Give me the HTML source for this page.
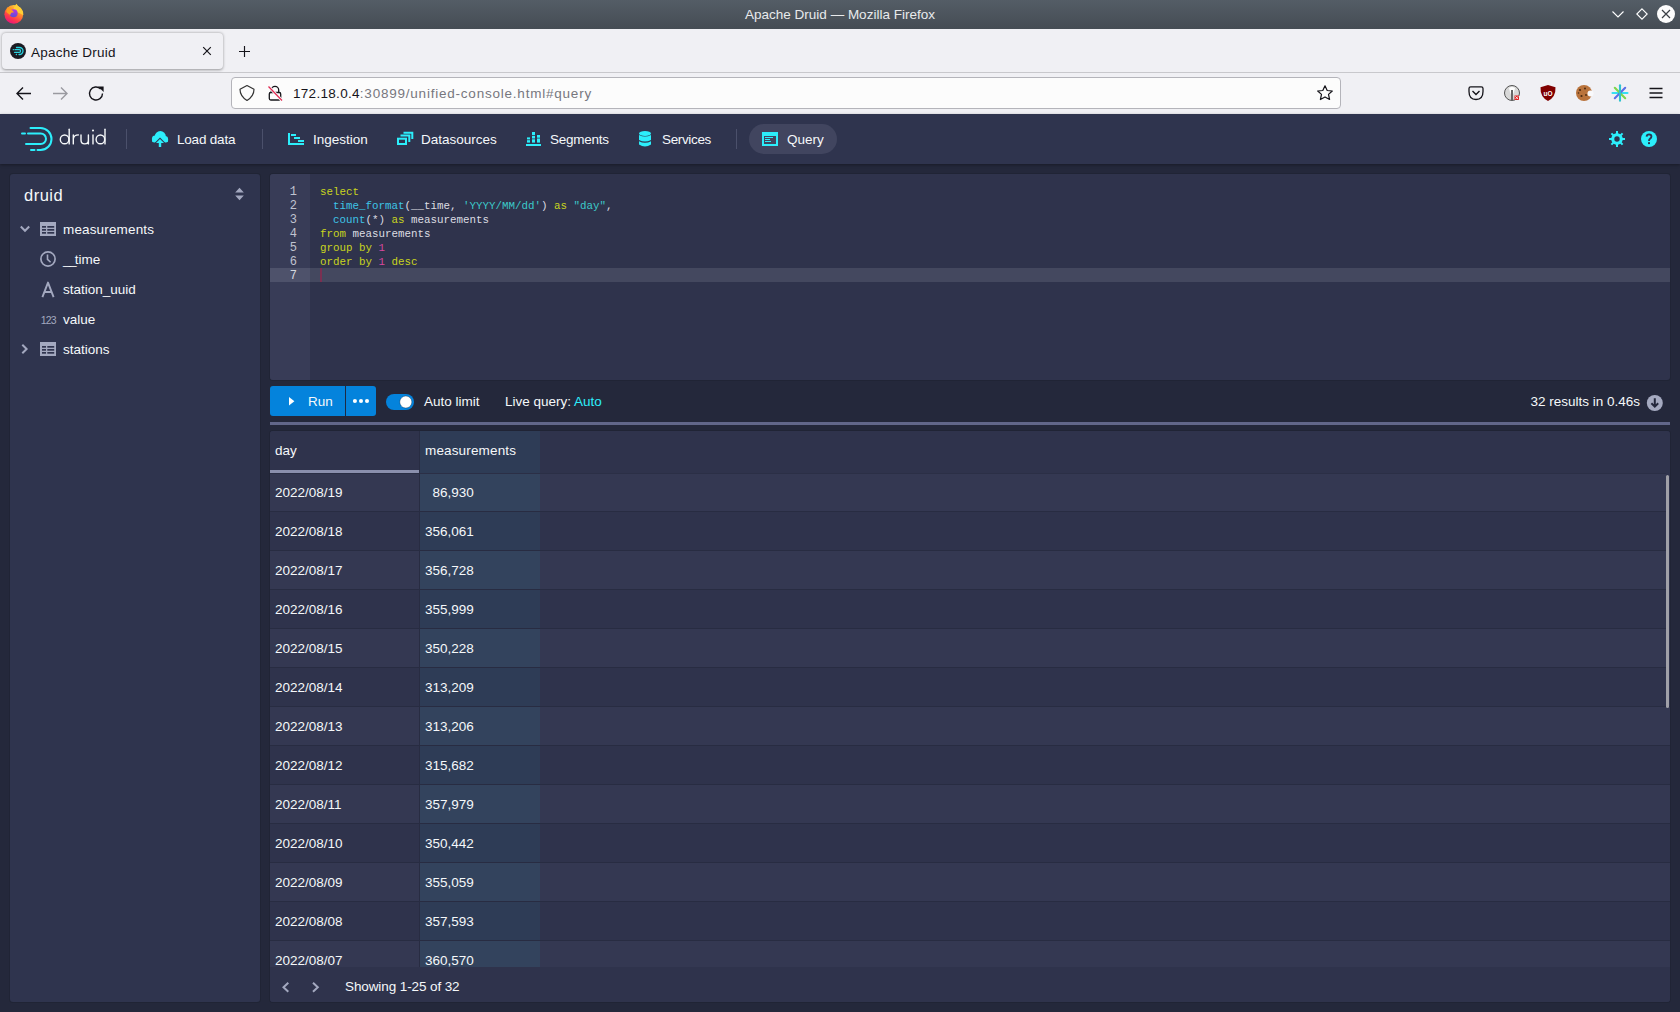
<!DOCTYPE html>
<html><head><meta charset="utf-8">
<style>
*{box-sizing:border-box;margin:0;padding:0}
html,body{width:1680px;height:1012px;overflow:hidden;background:#24283b;font-family:"Liberation Sans",sans-serif;}
.abs{position:absolute}
#titlebar{position:absolute;left:0;top:0;width:1680px;height:29px;background:linear-gradient(#545d66,#454c54);color:#e8eaec;font-size:13.5px;text-align:center;line-height:30px}
#tabbar{position:absolute;left:0;top:29px;width:1680px;height:44px;background:#f0f0f4;border-bottom:1px solid #c8c8cc}
#tab{position:absolute;left:2px;top:4px;width:221px;height:36px;background:#f0f0f4;border-radius:4px;box-shadow:0 0.5px 3px rgba(0,0,0,.38)}
#navbar{position:absolute;left:0;top:73px;width:1680px;height:41px;background:#f0f0f4}
#url{position:absolute;left:231px;top:4px;width:1110px;height:32px;background:#fcfcfc;border:1px solid #b4b4ba;border-radius:4px}
#header{position:absolute;left:0;top:114px;width:1680px;height:50px;background:#2f344e;box-shadow:0 1px 3px rgba(0,0,0,.35)}
.nav{position:absolute;top:114.7px;height:50px;line-height:50px;color:#f5f8fa;font-size:13.5px}
#left{position:absolute;left:10px;top:174px;width:250px;height:828px;background:#2f344e;border-radius:3px}
#editor{position:absolute;left:270px;top:174px;width:1400px;height:206px;background:#2f344e;border-radius:3px;overflow:hidden}
#gutter{position:absolute;left:0;top:0;width:40px;height:206px;background:#383c56}
#table{position:absolute;left:270px;top:431px;width:1400px;height:571px;background:#2f344e;border-radius:3px;overflow:hidden}
.t{position:absolute;line-height:20px;white-space:nowrap}
</style></head><body>
<div id="titlebar">Apache Druid — Mozilla Firefox</div>
<div id="tabbar"><div id="tab"></div></div>
<div id="navbar"><div id="url"></div></div>
<div class="abs" style="left:31px;top:29.5px;height:45px;line-height:45px;font-size:13.5px;letter-spacing:0.25px;color:#15141a">Apache Druid</div>
<div class="abs" style="left:293px;top:78px;height:31px;line-height:31px;font-size:13.5px;letter-spacing:0.3px;color:#15141a">172.18.0.4<span style="color:#77777e;letter-spacing:0.78px">:30899/unified-console.html#query</span></div>
<svg class="abs" style="left:0;top:0" width="1680" height="114" viewBox="0 0 1680 114">

<!-- firefox logo -->
<defs>
<linearGradient id="ffring" x1="0.8" y1="0.1" x2="0.3" y2="1"><stop offset="0" stop-color="#ffd43b"/><stop offset="0.35" stop-color="#ff8a2a"/><stop offset="0.7" stop-color="#ff3a4c"/><stop offset="1" stop-color="#e8137e"/></linearGradient>
<linearGradient id="ffglobe" x1="0.5" y1="0" x2="0.4" y2="1"><stop offset="0" stop-color="#b734e0"/><stop offset="1" stop-color="#5a4fd6"/></linearGradient>
</defs>
<circle cx="13.8" cy="14.3" r="9.4" fill="url(#ffring)"/>
<path d="M13.2,9.5 Q14.2,6 16.4,3.7 Q18,6.5 21,8.3 Q23.6,11.5 23.2,15 L17,12 Z" fill="#ffcf36"/>
<circle cx="13.6" cy="13.3" r="4" fill="url(#ffglobe)"/>
<path d="M6.3,12 Q6.6,8.8 7.4,7.2 L8.4,8.4 Q9.6,7.6 10.6,7.6 L11.4,9.4 Q12.8,10.6 14,12.2 L11.3,12.8 Q10.5,14 10.2,15 Q8,13.5 6.3,12 Z" fill="#ff9d1e"/>
<!-- window controls -->
<path d="M1612.5,11.5 L1618,17 L1623.5,11.5" fill="none" stroke="#fff" stroke-width="1.1"/>
<path d="M1642,8.8 L1647.2,14 L1642,19.2 L1636.8,14 Z" fill="none" stroke="#fff" stroke-width="1.1"/>
<circle cx="1666" cy="14" r="9" fill="#fcfcfc"/>
<path d="M1662,10 L1670,18 M1670,10 L1662,18" stroke="#3a3f45" stroke-width="1.2"/>
<!-- favicon -->
<circle cx="18" cy="51" r="8" fill="#1c1b22"/>
<g fill="none" stroke="#2bd3e0" stroke-width="1.3" stroke-linecap="round">
<path d="M16.5,47.5 H19.5 A3.5,3.5 0 0 1 19.5,54.5 H19"/>
<path d="M15,49.7 H19.3 A1.3,1.3 0 0 1 19.3,52.3 H14.5"/>
<path d="M13.3,49.7 H13.4 M16.3,54.5 H16.5"/>
</g>
<!-- tab close and plus -->
<path d="M203.2,47.2 L210.8,54.8 M210.8,47.2 L203.2,54.8" stroke="#15141a" stroke-width="1.2"/>
<path d="M239,51.5 H250 M244.5,46 V57" stroke="#15141a" stroke-width="1.15"/>
<!-- back / forward / reload -->
<path d="M17,93.5 H31 M23,87.5 L17,93.5 L23,99.5" fill="none" stroke="#15141a" stroke-width="1.4"/>
<path d="M53,93.5 H67 M61,87.5 L67,93.5 L61,99.5" fill="none" stroke="#9a9aa0" stroke-width="1.4"/>
<path d="M102.5,93.5 A6.5,6.5 0 1 1 100.7,89" fill="none" stroke="#15141a" stroke-width="1.4"/>
<path d="M98.2,86.6 L103.6,86.6 L103.6,92 Z" fill="#15141a"/>
<!-- shield -->
<path d="M247,85.5 L254,89.2 Q254,96 247,100.5 Q240,96 240,89.2 Z" fill="none" stroke="#333" stroke-width="1.2" stroke-linejoin="round"/>
<!-- lock slash -->
<path d="M271.3,92.5 V90 A3.7,3.7 0 0 1 278.7,90 V92.5" fill="none" stroke="#15141a" stroke-width="1.3"/>
<rect x="269.3" y="92.5" width="11.4" height="7.5" rx="1.5" fill="none" stroke="#15141a" stroke-width="1.3"/>
<path d="M268.5,86.5 L282,100.5" stroke="#f9f9fb" stroke-width="3"/>
<path d="M268.5,86.5 L282,100.5" stroke="#e22850" stroke-width="1.2"/>
<!-- star -->
<path d="M1325,85.8 L1327.2,90.5 L1332.3,91 L1328.5,94.4 L1329.6,99.5 L1325,96.9 L1320.4,99.5 L1321.5,94.4 L1317.7,91 L1322.8,90.5 Z" fill="none" stroke="#15141a" stroke-width="1.2" stroke-linejoin="round"/>
<!-- pocket -->
<path d="M1469,88.5 Q1469,86.8 1470.7,86.8 H1481.3 Q1483,86.8 1483,88.5 V91.5 Q1483,99.5 1476,99.5 Q1469,99.5 1469,91.5 Z" fill="none" stroke="#15141a" stroke-width="1.3"/>
<path d="M1472.5,91 L1476,94.5 L1479.5,91" fill="none" stroke="#15141a" stroke-width="1.4"/>
<!-- privacy badger-like -->
<circle cx="1512" cy="93" r="7.5" fill="#d8d8d8" stroke="#555" stroke-width="1"/>
<path d="M1509,88 Q1512,86 1515,88 L1514,92 Q1512,99 1510,92 Z" fill="#fff"/>
<path d="M1511,90 H1513 V100 H1511 Z" fill="#666"/>
<rect x="1514.5" y="95.5" width="4.5" height="4.5" fill="#e02020"/>
<path d="M1515.3,96.3 L1518.2,99.2 M1518.2,96.3 L1515.3,99.2" stroke="#fff" stroke-width="0.8"/>
<!-- ublock -->
<path d="M1548,85 L1555.5,87.3 Q1556,97 1548,101 Q1540,97 1540.5,87.3 Z" fill="#800000"/>
<text x="1548" y="96" font-family="Liberation Sans" font-size="6.5" font-weight="bold" fill="#fff" text-anchor="middle">uO</text>
<!-- cookie -->
<circle cx="1584" cy="93" r="8" fill="#b9733c"/>
<circle cx="1590.5" cy="93.5" r="3" fill="#f9f9fb"/>
<g fill="#4a2a12"><circle cx="1580" cy="90" r="1.1"/><circle cx="1585" cy="88.5" r="1"/><circle cx="1581.5" cy="96" r="1.1"/><circle cx="1586" cy="95" r="0.9"/><circle cx="1578.5" cy="93" r="0.8"/></g>
<!-- asterisk -->
<g stroke-width="2.1" stroke-linecap="round">
<path d="M1612.5,93 H1627.5" stroke="#36def2"/>
<path d="M1614.8,87.8 L1625.2,98.2" stroke="#7ed64c"/>
<path d="M1625.2,87.8 L1614.8,98.2" stroke="#5b6fe6"/>
<path d="M1620,85.2 V100.8" stroke="#2fc4cf"/>
</g>
<!-- hamburger -->
<path d="M1649.5,88.5 H1662.5 M1649.5,93 H1662.5 M1649.5,97.5 H1662.5" stroke="#15141a" stroke-width="1.3"/>
</svg>
<div id="header"></div>
<svg class="abs" style="left:0;top:114px" width="1680" height="50" viewBox="0 114 1680 50">
<g fill="none" stroke="#2ceefb" stroke-width="2" stroke-linecap="round">
<path d="M30.5,128 H40.5 A11,11 0 0 1 40.5,150 H37.5"/>
<path d="M31,150 H34.5"/>
<path d="M28,133.5 H40.75 A5.25,5.25 0 0 1 40.75,144 H26"/>
<path d="M22,133.5 H25"/>
</g>
<g fill="none" stroke="#f5f8fa" stroke-width="1.4" stroke-linecap="round">
<ellipse cx="64.6" cy="139.4" rx="4.3" ry="4.4"/><path d="M69.2,129.3 V143.9"/>
<path d="M73.3,135 V143.9 M73.3,139 Q73.8,134.9 78.4,134.9"/>
<path d="M81,135 V140 Q81,143.9 84.7,143.9 Q88.4,143.9 88.4,140 M88.4,135 V143.9"/>
<path d="M93,135 V143.9"/>
<ellipse cx="100.4" cy="139.4" rx="4.3" ry="4.4"/><path d="M105,129.3 V143.9"/>
</g>
<circle cx="93" cy="130.5" r="1.05" fill="#f5f8fa"/>
<rect x="126" y="129" width="1" height="20" fill="#4b506b"/>
<rect x="262" y="129" width="1" height="20" fill="#4b506b"/>
<rect x="736" y="129" width="1" height="20" fill="#4b506b"/>
<rect x="749" y="124" width="88" height="30" rx="15" fill="#41455f"/>
<!-- cloud upload -->
<g fill="#2ceefb">
<circle cx="160.3" cy="136.6" r="5.6"/><circle cx="155.3" cy="139" r="3.4"/><circle cx="164.9" cy="139.2" r="3.2"/>
<rect x="152" y="139" width="16.1" height="3.2" rx="1.5"/>
</g>
<path d="M160,138.6 L164.6,143.2 H161.4 V147.2 H158.6 V143.2 H155.4 Z" fill="#2ceefb" stroke="#2f344e" stroke-width="1.5" stroke-linejoin="miter"/>
<path d="M160,139 L164,143 H161.2 V147 H158.8 V143 H156 Z" fill="#2ceefb"/>
<!-- gantt -->
<g fill="#2ceefb">
<rect x="288" y="133" width="2" height="12"/><rect x="288" y="143" width="16" height="2"/>
<rect x="291" y="134" width="5" height="2"/><rect x="294" y="137" width="6" height="2"/><rect x="298" y="140" width="6" height="2"/>
</g>
<!-- multi-select -->
<g fill="none" stroke="#2ceefb" stroke-width="2">
<rect x="398" y="138.7" width="8" height="5.3"/>
<path d="M400.5,135.5 H409.3 V142"/>
<path d="M403.5,132.7 H412.3 V139"/>
</g>
<!-- stacked chart -->
<g fill="#2ceefb">
<rect x="526" y="144" width="15" height="2"/>
<rect x="527" y="137.4" width="3" height="2"/><rect x="527" y="140.2" width="3" height="2.4"/>
<rect x="532" y="132" width="3" height="3.2"/><rect x="532" y="136" width="3" height="2.5"/><rect x="532" y="139.3" width="3" height="3.3"/>
<rect x="537" y="135" width="3" height="2.7"/><rect x="537" y="138.5" width="3" height="4.1"/>
</g>
<!-- database -->
<g fill="#2ceefb">
<ellipse cx="645" cy="133.5" rx="6" ry="2.5"/>
<path d="M639,135 V140 Q645,143 651,140 V135 Q645,138 639,135 Z"/>
<path d="M639,141.2 V144.5 Q645,148.5 651,144.5 V141.2 Q645,144.2 639,141.2 Z"/>
</g>
<!-- application -->
<rect x="762" y="132" width="16" height="14" fill="#2ceefb"/>
<rect x="764" y="136" width="12" height="8" fill="#41455f"/>
<g fill="#2ceefb"><rect x="765" y="137" width="8" height="1"/><rect x="765" y="139" width="5" height="1"/><rect x="765" y="141" width="6" height="1"/></g>
<!-- cog -->
<g transform="translate(1609,131)">
<path fill="#2ceefb" fill-rule="evenodd" d="M7,0 H9 V2.3 Q10.3,2.6 11.3,3.3 L12.9,1.7 L14.3,3.1 L12.7,4.7 Q13.4,5.7 13.7,7 H16 V9 H13.7 Q13.4,10.3 12.7,11.3 L14.3,12.9 L12.9,14.3 L11.3,12.7 Q10.3,13.4 9,13.7 V16 H7 V13.7 Q5.7,13.4 4.7,12.7 L3.1,14.3 L1.7,12.9 L3.3,11.3 Q2.6,10.3 2.3,9 H0 V7 H2.3 Q2.6,5.7 3.3,4.7 L1.7,3.1 L3.1,1.7 L4.7,3.3 Q5.7,2.6 7,2.3 Z M8,5.3 A2.7,2.7 0 1 0 8,10.7 A2.7,2.7 0 1 0 8,5.3 Z"/>
</g>
<!-- help -->
<g transform="translate(1641,131)">
<circle cx="8" cy="8" r="8" fill="#2ceefb"/>
<path d="M5.6,5.6 Q5.8,3.4 8.1,3.4 Q10.5,3.5 10.4,5.7 Q10.3,6.8 9,7.8 Q8,8.6 8,10" fill="none" stroke="#2f344e" stroke-width="1.9"/>
<rect x="7" y="11.2" width="2" height="1.9" fill="#2f344e"/>
</g>
</svg>
<div class="nav" style="left:177px;letter-spacing:-0.2px">Load data</div>
<div class="nav" style="left:313px">Ingestion</div>
<div class="nav" style="left:421px">Datasources</div>
<div class="nav" style="left:550px;letter-spacing:-0.25px">Segments</div>
<div class="nav" style="left:662px;letter-spacing:-0.35px">Services</div>
<div class="nav" style="left:787px">Query</div>
<div class="abs" style="left:10px;top:174px;width:250px;height:828px;background:#2f344e;border-radius:3px;box-shadow:0 0 0 1px rgba(16,22,26,.18)"></div>
<div class="t" style="left:24px;top:185.28px;font-size:16.5px;color:#f5f8fa;letter-spacing:0.5px;">druid</div>
<svg class="abs" style="left:0;top:0" width="270" height="400" viewBox="0 0 270 400"><path d="M239.5,187.8 L243.8,192.6 H235.2 Z M235.2,195.4 H243.8 L239.5,200.2 Z" fill="#a3a8bf"/><path d="M20.8,226.5 L25,230.8 L29.2,226.5" fill="none" stroke="#a3a8bf" stroke-width="2"/><path d="M22.3,344.8 L26.6,349 L22.3,353.2" fill="none" stroke="#a3a8bf" stroke-width="2"/><rect x="40" y="222" width="16" height="14" fill="#a3a8bf"/><rect x="42" y="226" width="4" height="1.7" fill="#2f344e"/><rect x="47.3" y="226" width="6.9" height="1.7" fill="#2f344e"/><rect x="42" y="229" width="4" height="1.7" fill="#2f344e"/><rect x="47.3" y="229" width="6.9" height="1.7" fill="#2f344e"/><rect x="42" y="232" width="4" height="1.7" fill="#2f344e"/><rect x="47.3" y="232" width="6.9" height="1.7" fill="#2f344e"/><rect x="40" y="342" width="16" height="14" fill="#a3a8bf"/><rect x="42" y="346" width="4" height="1.7" fill="#2f344e"/><rect x="47.3" y="346" width="6.9" height="1.7" fill="#2f344e"/><rect x="42" y="349" width="4" height="1.7" fill="#2f344e"/><rect x="47.3" y="349" width="6.9" height="1.7" fill="#2f344e"/><rect x="42" y="352" width="4" height="1.7" fill="#2f344e"/><rect x="47.3" y="352" width="6.9" height="1.7" fill="#2f344e"/><circle cx="48" cy="259" r="7.1" fill="none" stroke="#a3a8bf" stroke-width="1.7"/><path d="M47.5,254.5 V259.3 L50.6,262.3" fill="none" stroke="#a3a8bf" stroke-width="1.6"/><path d="M42.4,297.2 L48,282.6 L53.6,297.2 M44.6,292 H51.4" fill="none" stroke="#a3a8bf" stroke-width="1.9" stroke-linejoin="round"/></svg>
<div class="t" style="left:40.8px;top:309.66px;font-size:10.5px;color:#a3a8bf;letter-spacing:-0.9px;">123</div>
<div class="t" style="left:63px;top:220.02px;font-size:13.5px;color:#f5f8fa;letter-spacing:0.15px;">measurements</div>
<div class="t" style="left:63px;top:250.02px;font-size:13.5px;color:#f5f8fa;letter-spacing:0px;"><span style="letter-spacing:-1.6px">__</span>time</div>
<div class="t" style="left:63px;top:280.02px;font-size:13.5px;color:#f5f8fa;letter-spacing:0px;">station_uuid</div>
<div class="t" style="left:63px;top:310.02px;font-size:13.5px;color:#f5f8fa;letter-spacing:0px;">value</div>
<div class="t" style="left:63px;top:340.02px;font-size:13.5px;color:#f5f8fa;letter-spacing:0px;">stations</div>
<div class="abs" style="left:270px;top:174px;width:1400px;height:206px;background:#2f334c;border-radius:3px;overflow:hidden;box-shadow:0 0 0 1px rgba(16,22,26,.18)"><div class="abs" style="left:0;top:0;width:40px;height:206px;background:#383c57"></div><div class="abs" style="left:0;top:94px;width:1400px;height:14px;background:#44485f"></div><div class="abs" style="left:0;top:94px;width:40px;height:14px;background:#4e526b"></div></div>
<div class="abs" style="left:320px;top:268px;width:2px;height:14px;background:#7a3052"></div>
<div class="t" style="left:320px;top:182.11px;font-size:10.83px;color:#f5f8fa;letter-spacing:0px;font-family:'Liberation Mono',monospace;white-space:pre;"><span style="color:#c8d41e">select</span></div>
<div class="t" style="left:320px;top:196.11px;font-size:10.83px;color:#f5f8fa;letter-spacing:0px;font-family:'Liberation Mono',monospace;white-space:pre;">  <span style="color:#3ec3e6">time_format</span><span style="color:#dcdde2">(__time, </span><span style="color:#3cc9c9">'YYYY/MM/dd'</span><span style="color:#dcdde2">) </span><span style="color:#c8d41e">as</span> <span style="color:#3cc9c9">"day"</span><span style="color:#dcdde2">,</span></div>
<div class="t" style="left:320px;top:210.11px;font-size:10.83px;color:#f5f8fa;letter-spacing:0px;font-family:'Liberation Mono',monospace;white-space:pre;">  <span style="color:#3ec3e6">count</span><span style="color:#dcdde2">(*) </span><span style="color:#c8d41e">as</span> <span style="color:#dcdde2">measurements</span></div>
<div class="t" style="left:320px;top:224.11px;font-size:10.83px;color:#f5f8fa;letter-spacing:0px;font-family:'Liberation Mono',monospace;white-space:pre;"><span style="color:#c8d41e">from</span> <span style="color:#dcdde2">measurements</span></div>
<div class="t" style="left:320px;top:238.11px;font-size:10.83px;color:#f5f8fa;letter-spacing:0px;font-family:'Liberation Mono',monospace;white-space:pre;"><span style="color:#c8d41e">group by</span> <span style="color:#d8489e">1</span></div>
<div class="t" style="left:320px;top:252.11px;font-size:10.83px;color:#f5f8fa;letter-spacing:0px;font-family:'Liberation Mono',monospace;white-space:pre;"><span style="color:#c8d41e">order by</span> <span style="color:#d8489e">1</span> <span style="color:#c8d41e">desc</span></div>
<div class="t" style="right:1383px;top:181.80px;font-size:12px;color:#c0c3d0;letter-spacing:0px;font-family:'Liberation Mono',monospace;">1</div>
<div class="t" style="right:1383px;top:195.80px;font-size:12px;color:#c0c3d0;letter-spacing:0px;font-family:'Liberation Mono',monospace;">2</div>
<div class="t" style="right:1383px;top:209.80px;font-size:12px;color:#c0c3d0;letter-spacing:0px;font-family:'Liberation Mono',monospace;">3</div>
<div class="t" style="right:1383px;top:223.80px;font-size:12px;color:#c0c3d0;letter-spacing:0px;font-family:'Liberation Mono',monospace;">4</div>
<div class="t" style="right:1383px;top:237.80px;font-size:12px;color:#c0c3d0;letter-spacing:0px;font-family:'Liberation Mono',monospace;">5</div>
<div class="t" style="right:1383px;top:251.80px;font-size:12px;color:#c0c3d0;letter-spacing:0px;font-family:'Liberation Mono',monospace;">6</div>
<div class="t" style="right:1383px;top:265.80px;font-size:12px;color:#d5d7df;letter-spacing:0px;font-family:'Liberation Mono',monospace;">7</div>
<div class="abs" style="left:270px;top:386px;width:106px;height:30px;background:#0483dc;border-radius:3px"></div>
<div class="abs" style="left:345px;top:386px;width:1px;height:30px;background:#1d2a44"></div>
<svg class="abs" style="left:0;top:380px" width="700" height="50" viewBox="0 380 700 50"><path d="M289,397 L294.4,401.2 L289,405.4 Z" fill="#fff"/><circle cx="354.9" cy="401" r="2.05" fill="#fff"/><circle cx="361" cy="401" r="2.05" fill="#fff"/><circle cx="367" cy="401" r="2.05" fill="#fff"/><rect x="386" y="394" width="28" height="16" rx="8" fill="#0483dc"/><circle cx="405.8" cy="402" r="6" fill="#fff" stroke="rgba(16,22,40,.45)" stroke-width="0.7"/></svg>
<div class="t" style="left:308px;top:391.62px;font-size:13.5px;color:#f5f8fa;letter-spacing:0px;">Run</div>
<div class="t" style="left:424px;top:391.62px;font-size:13.5px;color:#f5f8fa;letter-spacing:0px;">Auto limit</div>
<div class="t" style="left:505px;top:391.62px;font-size:13.5px;color:#f5f8fa;letter-spacing:0px;">Live query: <span style="color:#2ceefb">Auto</span></div>
<div class="t" style="right:40px;top:391.62px;font-size:13.5px;color:#f5f8fa;letter-spacing:0px;">32 results in 0.46s</div>
<svg class="abs" style="left:1645px;top:393px" width="18" height="18" viewBox="0 0 18 18"><circle cx="9.8" cy="10" r="8" fill="#a5aac0"/><path d="M9.8,5.3 V13.6 M6.4,10.3 L9.8,13.7 L13.2,10.3" fill="none" stroke="#24283b" stroke-width="2"/></svg>
<div class="abs" style="left:270px;top:422px;width:1400px;height:3px;background:#62678a"></div>
<div class="abs" style="left:270px;top:431px;width:1400px;height:571px;background:#2f334c;border-radius:3px;overflow:hidden;box-shadow:0 0 0 1px rgba(16,22,26,.18)">
<div class="abs" style="left:0;top:0;width:1400px;height:42px;background:#2f334c"></div>
<div class="abs" style="left:150px;top:0;width:120px;height:536px;background:#2e3c56"></div>
<div class="abs" style="left:0;top:42px;width:1396px;height:38px;background:#343852;border-top:1px solid #2b2f46"></div>
<div class="abs" style="left:150px;top:42px;width:120px;height:38px;background:#33435d;border-top:1px solid #2b2f46"></div>
<div class="abs" style="left:0;top:80px;width:1396px;height:39px;background:#2f334c;border-top:1px solid #282c42"></div>
<div class="abs" style="left:150px;top:80px;width:120px;height:39px;background:#2e3c56;border-top:1px solid #282c42"></div>
<div class="abs" style="left:0;top:119px;width:1396px;height:39px;background:#343852;border-top:1px solid #282c42"></div>
<div class="abs" style="left:150px;top:119px;width:120px;height:39px;background:#33435d;border-top:1px solid #282c42"></div>
<div class="abs" style="left:0;top:158px;width:1396px;height:39px;background:#2f334c;border-top:1px solid #282c42"></div>
<div class="abs" style="left:150px;top:158px;width:120px;height:39px;background:#2e3c56;border-top:1px solid #282c42"></div>
<div class="abs" style="left:0;top:197px;width:1396px;height:39px;background:#343852;border-top:1px solid #282c42"></div>
<div class="abs" style="left:150px;top:197px;width:120px;height:39px;background:#33435d;border-top:1px solid #282c42"></div>
<div class="abs" style="left:0;top:236px;width:1396px;height:39px;background:#2f334c;border-top:1px solid #282c42"></div>
<div class="abs" style="left:150px;top:236px;width:120px;height:39px;background:#2e3c56;border-top:1px solid #282c42"></div>
<div class="abs" style="left:0;top:275px;width:1400px;height:39px;background:#343852;border-top:1px solid #282c42"></div>
<div class="abs" style="left:150px;top:275px;width:120px;height:39px;background:#33435d;border-top:1px solid #282c42"></div>
<div class="abs" style="left:0;top:314px;width:1400px;height:39px;background:#2f334c;border-top:1px solid #282c42"></div>
<div class="abs" style="left:150px;top:314px;width:120px;height:39px;background:#2e3c56;border-top:1px solid #282c42"></div>
<div class="abs" style="left:0;top:353px;width:1400px;height:39px;background:#343852;border-top:1px solid #282c42"></div>
<div class="abs" style="left:150px;top:353px;width:120px;height:39px;background:#33435d;border-top:1px solid #282c42"></div>
<div class="abs" style="left:0;top:392px;width:1400px;height:39px;background:#2f334c;border-top:1px solid #282c42"></div>
<div class="abs" style="left:150px;top:392px;width:120px;height:39px;background:#2e3c56;border-top:1px solid #282c42"></div>
<div class="abs" style="left:0;top:431px;width:1400px;height:39px;background:#343852;border-top:1px solid #282c42"></div>
<div class="abs" style="left:150px;top:431px;width:120px;height:39px;background:#33435d;border-top:1px solid #282c42"></div>
<div class="abs" style="left:0;top:470px;width:1400px;height:39px;background:#2f334c;border-top:1px solid #282c42"></div>
<div class="abs" style="left:150px;top:470px;width:120px;height:39px;background:#2e3c56;border-top:1px solid #282c42"></div>
<div class="abs" style="left:0;top:509px;width:1400px;height:39px;background:#343852;border-top:1px solid #282c42"></div>
<div class="abs" style="left:150px;top:509px;width:120px;height:39px;background:#33435d;border-top:1px solid #282c42"></div>
<div class="abs" style="left:149px;top:0;width:1px;height:536px;background:#282c42"></div>
<div class="abs" style="left:0;top:39px;width:149px;height:3px;background:#8a8fad"></div>
<div class="abs" style="left:1396px;top:44px;width:3px;height:233px;background:#a0a0a8;border-radius:2px"></div>
<div class="abs" style="left:0;top:536px;width:1400px;height:35px;background:#2f334c"></div>
</div>
<div class="t" style="left:275px;top:440.82px;font-size:13.5px;color:#f5f8fa;letter-spacing:0px;">day</div>
<div class="t" style="left:425px;top:440.82px;font-size:13.5px;color:#f5f8fa;letter-spacing:0.15px;">measurements</div>
<div class="t" style="left:275px;top:482.92px;font-size:13.5px;color:#f5f8fa;letter-spacing:0px;">2022/08/19</div>
<div class="t" style="left:425px;top:482.92px;font-size:13.5px;color:#f5f8fa;letter-spacing:0px;">&nbsp;&nbsp;86,930</div>
<div class="t" style="left:275px;top:521.92px;font-size:13.5px;color:#f5f8fa;letter-spacing:0px;">2022/08/18</div>
<div class="t" style="left:425px;top:521.92px;font-size:13.5px;color:#f5f8fa;letter-spacing:0px;">356,061</div>
<div class="t" style="left:275px;top:560.92px;font-size:13.5px;color:#f5f8fa;letter-spacing:0px;">2022/08/17</div>
<div class="t" style="left:425px;top:560.92px;font-size:13.5px;color:#f5f8fa;letter-spacing:0px;">356,728</div>
<div class="t" style="left:275px;top:599.92px;font-size:13.5px;color:#f5f8fa;letter-spacing:0px;">2022/08/16</div>
<div class="t" style="left:425px;top:599.92px;font-size:13.5px;color:#f5f8fa;letter-spacing:0px;">355,999</div>
<div class="t" style="left:275px;top:638.92px;font-size:13.5px;color:#f5f8fa;letter-spacing:0px;">2022/08/15</div>
<div class="t" style="left:425px;top:638.92px;font-size:13.5px;color:#f5f8fa;letter-spacing:0px;">350,228</div>
<div class="t" style="left:275px;top:677.92px;font-size:13.5px;color:#f5f8fa;letter-spacing:0px;">2022/08/14</div>
<div class="t" style="left:425px;top:677.92px;font-size:13.5px;color:#f5f8fa;letter-spacing:0px;">313,209</div>
<div class="t" style="left:275px;top:716.92px;font-size:13.5px;color:#f5f8fa;letter-spacing:0px;">2022/08/13</div>
<div class="t" style="left:425px;top:716.92px;font-size:13.5px;color:#f5f8fa;letter-spacing:0px;">313,206</div>
<div class="t" style="left:275px;top:755.92px;font-size:13.5px;color:#f5f8fa;letter-spacing:0px;">2022/08/12</div>
<div class="t" style="left:425px;top:755.92px;font-size:13.5px;color:#f5f8fa;letter-spacing:0px;">315,682</div>
<div class="t" style="left:275px;top:794.92px;font-size:13.5px;color:#f5f8fa;letter-spacing:0px;">2022/08/11</div>
<div class="t" style="left:425px;top:794.92px;font-size:13.5px;color:#f5f8fa;letter-spacing:0px;">357,979</div>
<div class="t" style="left:275px;top:833.92px;font-size:13.5px;color:#f5f8fa;letter-spacing:0px;">2022/08/10</div>
<div class="t" style="left:425px;top:833.92px;font-size:13.5px;color:#f5f8fa;letter-spacing:0px;">350,442</div>
<div class="t" style="left:275px;top:872.92px;font-size:13.5px;color:#f5f8fa;letter-spacing:0px;">2022/08/09</div>
<div class="t" style="left:425px;top:872.92px;font-size:13.5px;color:#f5f8fa;letter-spacing:0px;">355,059</div>
<div class="t" style="left:275px;top:911.92px;font-size:13.5px;color:#f5f8fa;letter-spacing:0px;">2022/08/08</div>
<div class="t" style="left:425px;top:911.92px;font-size:13.5px;color:#f5f8fa;letter-spacing:0px;">357,593</div>
<div class="t" style="left:275px;top:950.92px;font-size:13.5px;color:#f5f8fa;letter-spacing:0px;">2022/08/07</div>
<div class="t" style="left:425px;top:950.92px;font-size:13.5px;color:#f5f8fa;letter-spacing:0px;">360,570</div>
<svg class="abs" style="left:270px;top:967px" width="100" height="35" viewBox="270 967 100 35"><path d="M288.3,982.8 L283.5,987.3 L288.3,991.8 M313,982.8 L317.8,987.3 L313,991.8" fill="none" stroke="#a3a8bf" stroke-width="2"/></svg>
<div class="t" style="left:345px;top:976.62px;font-size:13.5px;color:#f5f8fa;letter-spacing:-0.1px;">Showing 1-25 of 32</div>
</body></html>
